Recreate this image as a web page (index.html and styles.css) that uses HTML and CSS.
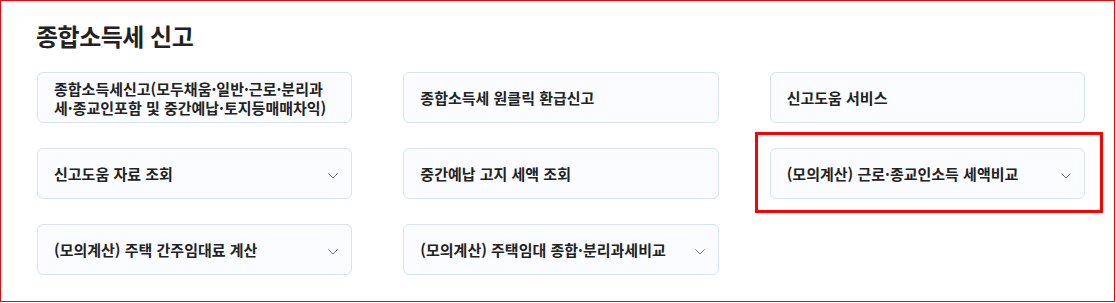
FILE: index.html
```html
<!DOCTYPE html>
<html lang="ko">
<head>
  <meta charset="UTF-8">
  <meta name="viewport" content="width=device-width, initial-scale=1.0">
  <title>종합소득세 신고</title>
  <link rel="stylesheet" href="styles.css">
</head>
<body>
  <div class="frame">
    <h2 class="title">종합소득세 신고</h2>

    <div class="menu">
      <a class="item" href="#">종합소득세신고(모두채움·일반·근로·분리과세·종교인포함 및 중간예납·토지등매매차익)</a>
      <a class="item" href="#">종합소득세 원클릭 환급신고</a>
      <a class="item" href="#">신고도움 서비스</a>

      <a class="item" href="#">신고도움 자료 조회
        <svg class="chev" width="10" height="6" viewBox="0 0 10 6"><polyline points="0.5,0.5 5,5 9.5,0.5" /></svg>
      </a>
      <a class="item" href="#">중간예납 고지 세액 조회</a>
      <a class="item marked" href="#">(모의계산) 근로·종교인소득 세액비교
        <svg class="chev" width="10" height="6" viewBox="0 0 10 6"><polyline points="0.5,0.5 5,5 9.5,0.5" /></svg>
      </a>

      <a class="item" href="#">(모의계산) 주택 간주임대료 계산
        <svg class="chev" width="10" height="6" viewBox="0 0 10 6"><polyline points="0.5,0.5 5,5 9.5,0.5" /></svg>
      </a>
      <a class="item" href="#">(모의계산) 주택임대 종합·분리과세비교
        <svg class="chev" width="10" height="6" viewBox="0 0 10 6"><polyline points="0.5,0.5 5,5 9.5,0.5" /></svg>
      </a>
    </div>
  </div>
</body>
</html>
```

FILE: styles.css
```css
body { margin: 0; background: #fff; font-family: "Noto Sans CJK KR", "Noto Sans", sans-serif; color: #222; }
.frame { width: 1115px; height: 302px; box-sizing: border-box; border: 1px solid #f00; padding: 17px 0 0 36px; }
.title { margin: 0 0 19px -1px; font-size: 24px; line-height: 35px; font-weight: 700; letter-spacing: -0.5px; color: #222; }
.menu { width: 1048px; display: grid; grid-template-columns: repeat(3, 1fr); column-gap: 51px; row-gap: 25px; }
.item { position: relative; height: 51px; box-sizing: border-box; display: flex; align-items: center; justify-content: space-between; padding: 0 13px 0 16px; border: 1px solid #d7e2f6; border-radius: 6px; background: #fafcff; color: #222; text-decoration: none; font-size: 15px; line-height: 19px; font-weight: 700; }
.item:first-child { padding-right: 24px; }
.chev { flex: none; margin: 4px 0 0 12px; }
.chev polyline { fill: none; stroke: #707070; stroke-width: 1; }
.marked::after { content: ""; position: absolute; top: -17px; left: -16px; right: -19px; bottom: -15px; border: 3px solid #f00; pointer-events: none; }
```
